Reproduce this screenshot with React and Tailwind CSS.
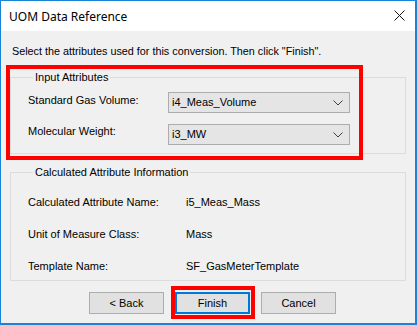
import React from 'react';

function Dropdown({ value }) {
  return (
    <div className="w-[182px] h-[21px] bg-[#e5e5e5] border border-[#acacac] flex items-center justify-between pl-[3px] pr-[5px]">
      <span>{value}</span>
      <svg width="10" height="6" viewBox="0 0 10 6" className="mr-[1px]">
        <polyline points="0.5,0.5 5,5 9.5,0.5" fill="none" stroke="#404040" strokeWidth="1" />
      </svg>
    </div>
  );
}

function InfoRow({ label, value }) {
  return (
    <div className="flex h-[13px] items-center">
      <span className="w-[158px]">{label}</span>
      <span>{value}</span>
    </div>
  );
}

function Button({ children, primary }) {
  return (
    <button
      className={`w-[75px] h-[22px] bg-[#e1e1e1] flex items-center justify-center ${
        primary ? 'border-2 border-[#0078d7]' : 'border border-[#adadad]'
      }`}
    >
      {children}
    </button>
  );
}

export default function App() {
  return (
    <div
      className="w-[417px] h-[325px] flex flex-col border-t border-l border-r-2 border-b-2 border-[#1883d7] text-black text-[11px] leading-[13px]"
      style={{ fontFamily: '"Liberation Sans", Arial, sans-serif' }}
    >
      {/* title bar */}
      <div className="h-[30px] bg-white flex items-center justify-between pl-[8px] pr-[10px] shrink-0">
        <span className="text-[12px] pt-[1px]" style={{ fontFamily: '"Noto Sans", sans-serif' }}>
          UOM Data Reference
        </span>
        <svg width="11" height="11" viewBox="0 0 11 11" className="mb-[2px]">
          <line x1="0.5" y1="0.5" x2="10.5" y2="10.5" stroke="#111" strokeWidth="1" />
          <line x1="10.5" y1="0.5" x2="0.5" y2="10.5" stroke="#111" strokeWidth="1" />
        </svg>
      </div>

      <div className="flex-1 bg-[#f0f0f0] relative">
        <p className="pl-[11px] pt-[14px] text-[10.8px]">Select the attributes used for this conversion. Then click "Finish".</p>

        {/* Input Attributes */}
        <fieldset className="mx-[9px] mt-[13px] border border-[#dcdcdc] pl-[17px] pb-[8px]">
          <legend className="ml-[5px] px-[2px]">Input Attributes</legend>
          <div className="flex flex-col gap-[11px] pt-[8px]">
            <div className="flex items-start">
              <span className="w-[140px] pt-[2px]">Standard Gas Volume:</span>
              <Dropdown value="i4_Meas_Volume" />
            </div>
            <div className="flex items-start">
              <span className="w-[140px] pt-[1px]">Molecular Weight:</span>
              <Dropdown value="i3_MW" />
            </div>
          </div>
        </fieldset>

        {/* Calculated Attribute Information */}
        <fieldset className="mx-[9px] mt-[12px] border border-[#dcdcdc] pl-[17px] pb-[7px]">
          <legend className="ml-[5px] px-[2px]">Calculated Attribute Information</legend>
          <div className="flex flex-col gap-[19px] pt-[17px]">
            <InfoRow label="Calculated Attribute Name:" value="i5_Meas_Mass" />
            <InfoRow label="Unit of Measure Class:" value="Mass" />
            <InfoRow label="Template Name:" value="SF_GasMeterTemplate" />
          </div>
        </fieldset>

        <div className="flex gap-[11px] pl-[88px] mt-[11px]">
          <Button>&lt; Back</Button>
          <div className="relative">
            <Button primary>Finish</Button>
            <span className="absolute -left-[4px] -right-[5px] -top-[6px] -bottom-[5px] border-4 border-[#ff0000]" />
          </div>
          <Button>Cancel</Button>
        </div>

        {/* annotation box */}
        <span className="absolute left-[5px] top-[34px] w-[357px] h-[95px] border-4 border-[#ff0000]" />
      </div>
    </div>
  );
}
